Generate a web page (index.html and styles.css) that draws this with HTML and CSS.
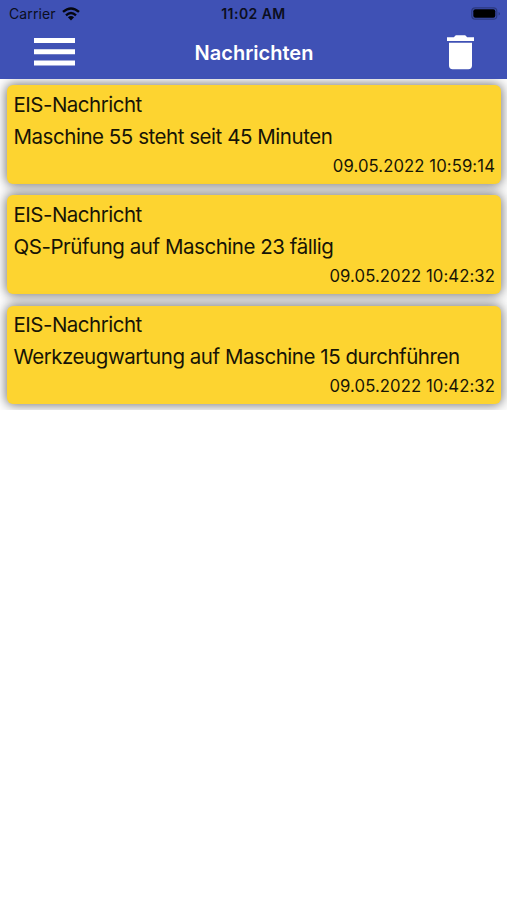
FILE: index.html
```html
<!DOCTYPE html>
<html lang="de">
<head>
<meta charset="utf-8">
<title>Nachrichten</title>
<link rel="stylesheet" href="styles.css">
</head>
<body>
<header class="top">
  <div class="status">
    <div class="carrier"><span>Carrier</span>
      <svg class="wifi" width="18" height="14" viewBox="0 0 18 14"><g fill="none" stroke="#05060f" stroke-width="2.4"><path d="M1 4.9Q9-2.1 17 4.9"/><path d="M4 8.3Q9 3.9 14 8.3"/></g><path fill="#05060f" d="M5.9 10.2Q9 7.6 12.1 10.2L9 13.4Z"/></svg>
    </div>
    <span class="clock">11:02 AM</span>
    <svg class="battery" width="30" height="14" viewBox="0 0 30 14"><rect x=".8" y=".8" width="25" height="11.4" rx="3.5" fill="none" stroke="#2c397f" stroke-width="1.2"/><rect x="2.3" y="2.3" width="22" height="8.4" rx="2" fill="#000"/><path d="M27.6 5v3.4q1.4-.6 1.4-1.7t-1.4-1.7" fill="#2c397f"/></svg>
  </div>
  <nav class="bar">
    <svg class="menu" width="41" height="28" viewBox="0 0 41 28"><path fill="#fff" d="M0 0h41v5H0zM0 11.3h41v5H0zM0 22.6h41v5H0z"/></svg>
    <h1>Nachrichten</h1>
    <svg class="trash" width="27" height="35" viewBox="0 0 27 35"><path fill="#fff" d="M0 2.3h6.8L8.8.3h9.4l2 2H27v3.8H0zM2 7.8h23v22.7a3.7 3.7 0 0 1-3.7 3.7H5.7A3.7 3.7 0 0 1 2 30.5z"/></svg>
  </nav>
</header>
<main class="list">
  <div class="row"><article class="card"><p class="kind">EIS-Nachricht</p><p class="text">Maschine 55 steht seit 45 Minuten</p><time>09.05.2022 10:59:14</time></article></div>
  <div class="row"><article class="card"><p class="kind">EIS-Nachricht</p><p class="text">QS-Prüfung auf Maschine 23 fällig</p><time>09.05.2022 10:42:32</time></article></div>
  <div class="row"><article class="card"><p class="kind">EIS-Nachricht</p><p class="text">Werkzeugwartung auf Maschine 15 durchführen</p><time>09.05.2022 10:42:32</time></article></div>
</main>
</body>
</html>
```
FILE: styles.css
```css
* { box-sizing: border-box; }
body { margin: 0; background: #fff; font-family: Inter, "Liberation Sans", sans-serif; color: #171406; }
h1, p { margin: 0; }
svg { display: block; }
.top { height: 79px; background: #3f51b5; }
.status { height: 27px; display: grid; grid-template-columns: 1fr auto 1fr; align-items: center; padding: 0 6px 0 9px; color: #0b0e20; }
.carrier { display: flex; align-items: center; gap: 6px; font-size: 14px; letter-spacing: .1px; }
.clock { font-size: 14px; font-weight: 600; letter-spacing: .45px; margin: 0 3px 0 0; }
.battery { justify-self: end; }
.bar { height: 52px; display: grid; grid-template-columns: 1fr auto 1fr; align-items: center; padding: 0 33px 2px 34px; }
.bar h1 { color: #fff; font-size: 20px; font-weight: 570; line-height: 28px; padding-top: 1px; }
.trash { justify-self: end; }
.list { overflow: hidden; }
.row { height: 110.3px; padding: 6px 6px 5.5px 7px; }
.card { height: 98.8px; background: #fdd430; border-radius: 6px; box-shadow: 0 0 12px 1px rgba(0, 0, 0, .55); padding: 3.7px 6.5px; display: flex; flex-direction: column; }
.kind, .text { font-size: 20.5px; line-height: 32px; letter-spacing: -.46px; white-space: nowrap; }
.kind { letter-spacing: -.5px; }
.card time { align-self: flex-end; font-size: 16.7px; line-height: 27px; letter-spacing: .08px; margin-right: -.5px; }
```
